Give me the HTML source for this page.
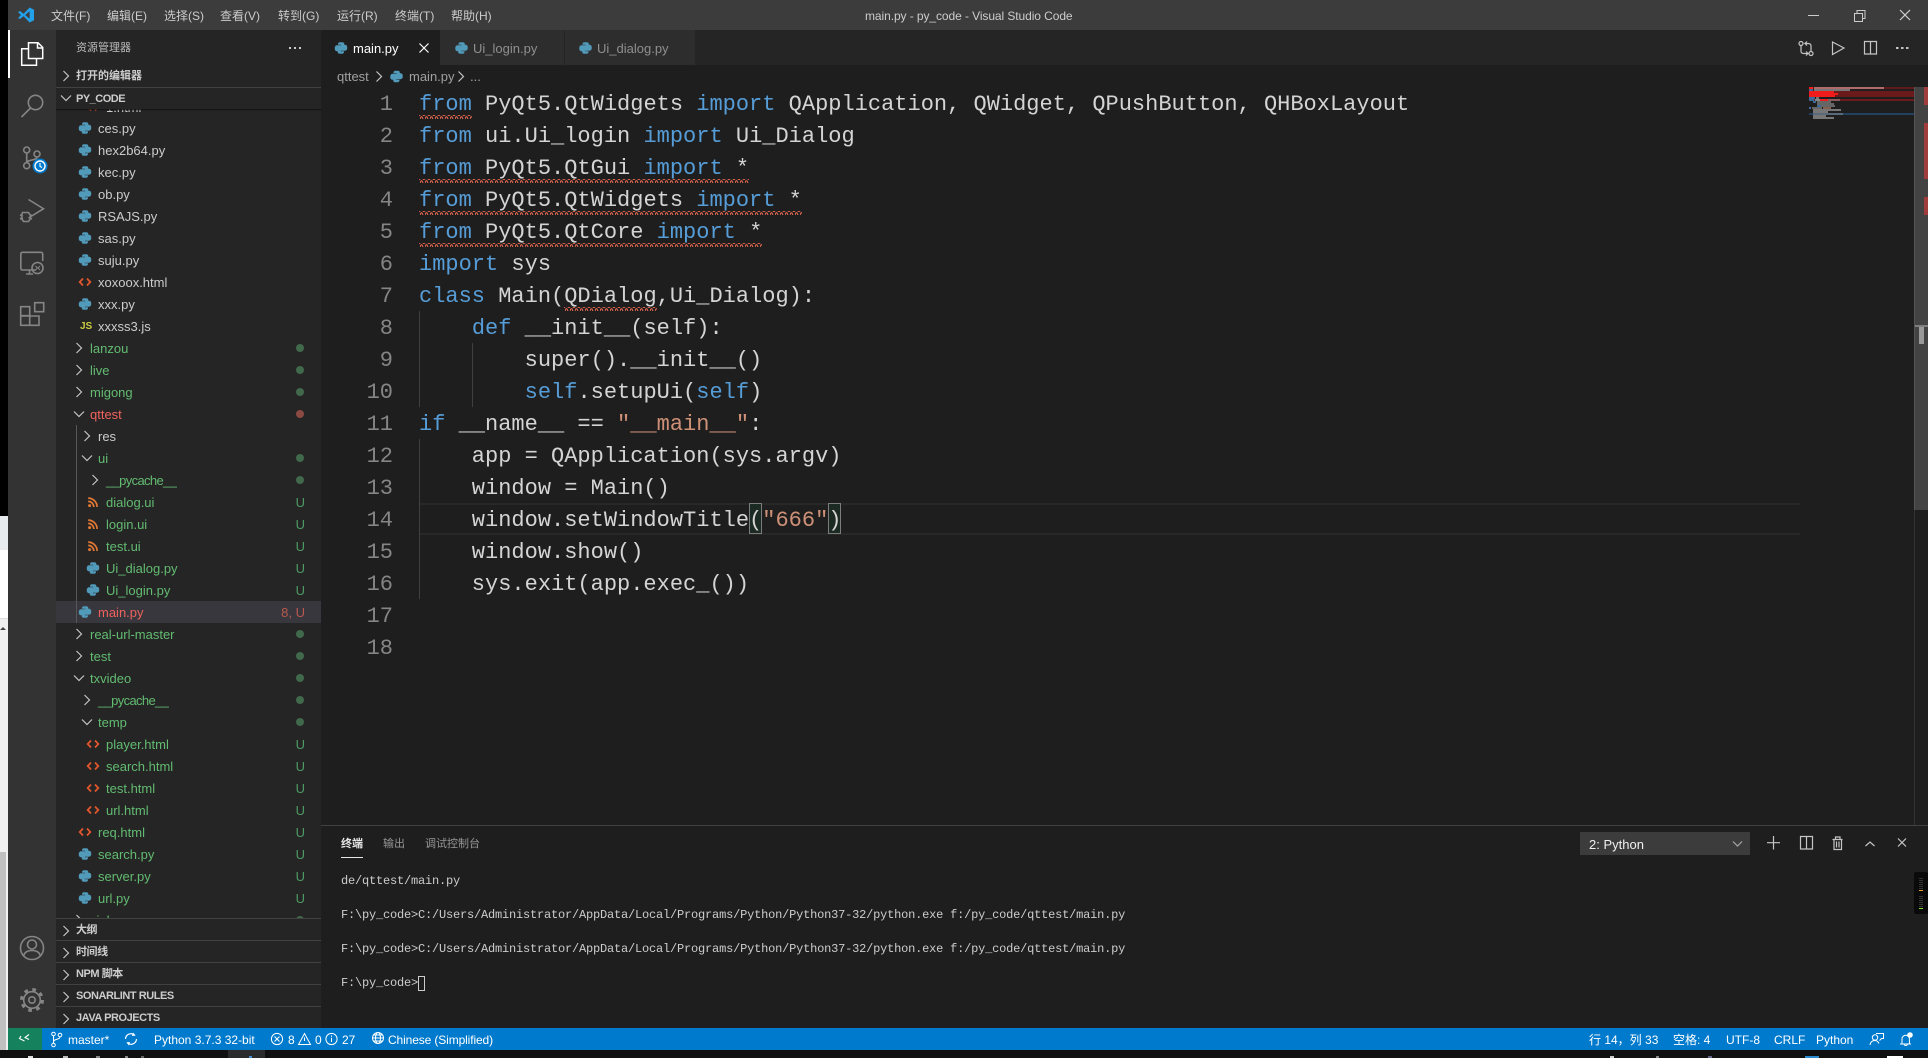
<!DOCTYPE html>
<html lang="zh"><head><meta charset="utf-8"><title>main.py - py_code - Visual Studio Code</title>
<style>
html,body{margin:0;padding:0;background:#1e1e1e}
body{position:relative;width:1928px;height:1058px;overflow:hidden;font-family:"Liberation Sans","Noto Sans CJK SC",sans-serif;font-size:13px;color:#ccc}
div,span.a{position:absolute}
.tx{position:absolute;white-space:pre;line-height:1}
#tree{position:absolute;left:56px;top:109px;width:265px;height:809px;overflow:hidden}
.r{position:absolute;left:0;width:265px;height:22px;line-height:22px;white-space:pre}
.r svg{position:absolute;top:3px;width:16px;height:16px}
.r b{position:absolute;font-weight:normal;top:1px}
.t1{left:34px}.t2{left:42px}.t3{left:50px}
.g{color:#62bb70}.e{color:#f0625c}.w{color:#ccc}
.p{letter-spacing:-.65px}
.d{position:absolute;left:240px;top:7px;width:8px;height:8px;border-radius:50%;background:#41694b}
.u{position:absolute;right:16px;top:1px;color:#4d9a62}
.sec{position:absolute;left:56px;width:265px;height:21px;border-top:1px solid #414141;font-weight:bold;font-size:11px;line-height:21px;color:#ccc;letter-spacing:-.45px}
.sec span{position:absolute;left:20px;top:1px}
.ln{position:absolute;left:340px;width:53px;text-align:right;font:22px/32px "Liberation Mono",monospace;color:#858585;margin-top:2px}
.c{position:absolute;left:419px;white-space:pre;font:22px/32px "Liberation Mono",monospace;color:#d4d4d4;margin-top:2px}
.k{color:#569cd6}.s{color:#ce9178}
.term{position:absolute;left:341px;white-space:pre;font:12px/17px "Liberation Mono",monospace;letter-spacing:-.2px;color:#cccccc;margin-top:1px}
.st{position:absolute;top:1029px;height:22px;line-height:22px;font-size:12px;color:#fff;white-space:pre}
.m{position:absolute;top:1px;height:30px;line-height:30px;font-size:12px;color:#ccc;white-space:pre}
</style></head><body>

<svg width="0" height="0" style="position:absolute">
<defs>
<symbol id="py" viewBox="0 0 16 16"><g fill="#519aba"><path id="pyh" d="M5 4.200a2 2 0 0 1 2-2h2.300a2 2 0 0 1 2 2v2.400a1.500 1.500 0 0 1-1.500 1.500H7.500a2.200 2.200 0 0 0-2.300 2.200V11.300H4a2.200 2.200 0 0 1-2.200-2.200V7.500A2.200 2.200 0 0 1 4 5.300h4.200v-.6H5z"/><path transform="rotate(180 8 8)" d="M5 4.200a2 2 0 0 1 2-2h2.300a2 2 0 0 1 2 2v2.400a1.500 1.500 0 0 1-1.500 1.500H7.500a2.200 2.200 0 0 0-2.300 2.200V11.300H4a2.200 2.200 0 0 1-2.200-2.200V7.500A2.200 2.200 0 0 1 4 5.300h4.200v-.6H5z"/></g></symbol>
<symbol id="ht" viewBox="0 0 16 16"><g fill="none" stroke="#e0562b" stroke-width="1.800"><polyline points="6,4.500 2.700,8 6,11.500"/><polyline points="10,4.500 13.300,8 10,11.500"/></g></symbol>
<symbol id="rs" viewBox="0 0 16 16"><circle cx="4.600" cy="11.600" r="1.500" fill="#e37933"/><g fill="none" stroke="#e37933" stroke-width="1.700"><path d="M3.200 7.400A5.600 5.600 0 0 1 8.800 13"/><path d="M3.200 4.100A8.900 8.900 0 0 1 12.100 13"/></g></symbol>
<symbol id="cr" viewBox="0 0 16 16"><polyline points="5.500,3 10.500,8 5.500,13" fill="none" stroke="#c5c5c5" stroke-width="1.200"/></symbol>
<symbol id="cd" viewBox="0 0 16 16"><polyline points="3,5.500 8,10.500 13,5.500" fill="none" stroke="#c5c5c5" stroke-width="1.200"/></symbol>
<pattern id="sq" width="5" height="4" patternUnits="userSpaceOnUse"><path d="M0 3.200Q1.250 -1.200 2.500 2T5 3.200" fill="none" stroke="#ee6a52" stroke-width="1"/></pattern>
</defs>
</svg>

<!-- left desktop strip -->
<div style="left:0;top:0;width:8px;height:516px;background:#000"></div>
<div style="left:0;top:516px;width:8px;height:34px;background:#e8ebee"></div>
<div style="left:0;top:550px;width:8px;height:68px;background:#fff"></div>
<div style="left:0;top:618px;width:8px;height:434px;background:#f0f0f0;border-top:1px solid #ddd"></div>
<div style="left:0;top:852px;width:6px;height:198px;background:#c0c0c0"></div>
<div style="left:0;top:627px;width:0;height:0;border-left:3px solid transparent;border-right:3px solid transparent;border-bottom:3px solid #444"></div>

<!-- title bar -->
<div style="left:8px;top:0;width:1920px;height:30px;background:#3c3c3c"></div>
<div class="m" style="left:51px">文件(F)</div>
<div class="m" style="left:107px">编辑(E)</div>
<div class="m" style="left:164px">选择(S)</div>
<div class="m" style="left:220px">查看(V)</div>
<div class="m" style="left:278px">转到(G)</div>
<div class="m" style="left:337px">运行(R)</div>
<div class="m" style="left:395px">终端(T)</div>
<div class="m" style="left:451px">帮助(H)</div>
<div class="m" style="left:865px;letter-spacing:-.08px">main.py - py_code - Visual Studio Code</div>

<!-- activity bar -->
<div style="left:8px;top:30px;width:48px;height:998px;background:#333"></div>
<div style="left:8px;top:30px;width:2px;height:48px;background:#fff"></div>

<!-- sidebar -->
<div style="left:56px;top:30px;width:265px;height:998px;background:#252526"></div>
<div class="tx" style="left:76px;top:43px;font-size:11px;color:#bbb">资源管理器</div>
<div style="left:56px;top:87px;width:265px;height:1px;background:#414141"></div>
<div class="tx" style="left:76px;top:71px;font-size:11px;font-weight:bold;color:#ccc">打开的编辑器</div>
<div class="tx" style="left:76px;top:94px;font-size:11px;font-weight:bold;color:#ccc;letter-spacing:-.5px">PY_CODE</div>

<div id="tree">
<div class="r" style="top:-13px"><svg style="left:29px"><use href="#ht"/></svg><b class="t3 w">1.html</b></div>
<div class="r" style="top:8px"><svg style="left:21px"><use href="#py"/></svg><b class="t2 w">ces.py</b></div>
<div class="r" style="top:30px"><svg style="left:21px"><use href="#py"/></svg><b class="t2 w">hex2b64.py</b></div>
<div class="r" style="top:52px"><svg style="left:21px"><use href="#py"/></svg><b class="t2 w">kec.py</b></div>
<div class="r" style="top:74px"><svg style="left:21px"><use href="#py"/></svg><b class="t2 w">ob.py</b></div>
<div class="r" style="top:96px"><svg style="left:21px"><use href="#py"/></svg><b class="t2 w">RSAJS.py</b></div>
<div class="r" style="top:118px"><svg style="left:21px"><use href="#py"/></svg><b class="t2 w">sas.py</b></div>
<div class="r" style="top:140px"><svg style="left:21px"><use href="#py"/></svg><b class="t2 w">suju.py</b></div>
<div class="r" style="top:162px"><svg style="left:21px"><use href="#ht"/></svg><b class="t2 w">xoxoox.html</b></div>
<div class="r" style="top:184px"><svg style="left:21px"><use href="#py"/></svg><b class="t2 w">xxx.py</b></div>
<div class="r" style="top:206px"><b style="left:24px;font-weight:bold;font-size:10px;color:#cbcb41">JS</b><b class="t2 w">xxxss3.js</b></div>
<div class="r" style="top:228px"><svg style="left:15px"><use href="#cr"/></svg><b class="t1 g">lanzou</b><i class="d"></i></div>
<div class="r" style="top:250px"><svg style="left:15px"><use href="#cr"/></svg><b class="t1 g">live</b><i class="d"></i></div>
<div class="r" style="top:272px"><svg style="left:15px"><use href="#cr"/></svg><b class="t1 g">migong</b><i class="d"></i></div>
<div class="r" style="top:294px"><svg style="left:15px"><use href="#cd"/></svg><b class="t1 e">qttest</b><i class="d" style="background:#8c4a43"></i></div>
<div class="r" style="top:316px"><svg style="left:23px"><use href="#cr"/></svg><b class="t2 w">res</b></div>
<div class="r" style="top:338px"><svg style="left:23px"><use href="#cd"/></svg><b class="t2 g">ui</b><i class="d"></i></div>
<div class="r" style="top:360px"><svg style="left:31px"><use href="#cr"/></svg><b class="t3 g p">__pycache__</b><i class="d"></i></div>
<div class="r" style="top:382px"><svg style="left:29px"><use href="#rs"/></svg><b class="t3 g">dialog.ui</b><span class="u">U</span></div>
<div class="r" style="top:404px"><svg style="left:29px"><use href="#rs"/></svg><b class="t3 g">login.ui</b><span class="u">U</span></div>
<div class="r" style="top:426px"><svg style="left:29px"><use href="#rs"/></svg><b class="t3 g">test.ui</b><span class="u">U</span></div>
<div class="r" style="top:448px"><svg style="left:29px"><use href="#py"/></svg><b class="t3 g">Ui_dialog.py</b><span class="u">U</span></div>
<div class="r" style="top:470px"><svg style="left:29px"><use href="#py"/></svg><b class="t3 g">Ui_login.py</b><span class="u">U</span></div>
<div class="r" style="top:492px;background:#37373d"><svg style="left:21px"><use href="#py"/></svg><b class="t2 e">main.py</b><span class="u" style="color:#b9584f">8, U</span></div>
<div class="r" style="top:514px"><svg style="left:15px"><use href="#cr"/></svg><b class="t1 g">real-url-master</b><i class="d"></i></div>
<div class="r" style="top:536px"><svg style="left:15px"><use href="#cr"/></svg><b class="t1 g">test</b><i class="d"></i></div>
<div class="r" style="top:558px"><svg style="left:15px"><use href="#cd"/></svg><b class="t1 g">txvideo</b><i class="d"></i></div>
<div class="r" style="top:580px"><svg style="left:23px"><use href="#cr"/></svg><b class="t2 g p">__pycache__</b><i class="d"></i></div>
<div class="r" style="top:602px"><svg style="left:23px"><use href="#cd"/></svg><b class="t2 g">temp</b><i class="d"></i></div>
<div class="r" style="top:624px"><svg style="left:29px"><use href="#ht"/></svg><b class="t3 g">player.html</b><span class="u">U</span></div>
<div class="r" style="top:646px"><svg style="left:29px"><use href="#ht"/></svg><b class="t3 g">search.html</b><span class="u">U</span></div>
<div class="r" style="top:668px"><svg style="left:29px"><use href="#ht"/></svg><b class="t3 g">test.html</b><span class="u">U</span></div>
<div class="r" style="top:690px"><svg style="left:29px"><use href="#ht"/></svg><b class="t3 g">url.html</b><span class="u">U</span></div>
<div class="r" style="top:712px"><svg style="left:21px"><use href="#ht"/></svg><b class="t2 g">req.html</b><span class="u">U</span></div>
<div class="r" style="top:734px"><svg style="left:21px"><use href="#py"/></svg><b class="t2 g">search.py</b><span class="u">U</span></div>
<div class="r" style="top:756px"><svg style="left:21px"><use href="#py"/></svg><b class="t2 g">server.py</b><span class="u">U</span></div>
<div class="r" style="top:778px"><svg style="left:21px"><use href="#py"/></svg><b class="t2 g">url.py</b><span class="u">U</span></div>
<div class="r" style="top:800px"><svg style="left:15px"><use href="#cr"/></svg><b class="t1 g">xinhua</b><i class="d"></i></div>
<div style="left:20px;top:316px;width:1px;height:198px;background:#585858"></div>
</div>
<div style="left:56px;top:109px;width:265px;height:2px;background:linear-gradient(#111,rgba(0,0,0,0))"></div>

<div class="sec" style="top:918px"><span>大纲</span></div>
<div class="sec" style="top:940px"><span>时间线</span></div>
<div class="sec" style="top:962px"><span>NPM 脚本</span></div>
<div class="sec" style="top:984px"><span>SONARLINT RULES</span></div>
<div class="sec" style="top:1006px"><span>JAVA PROJECTS</span></div>

<!-- tabs -->
<div style="left:321px;top:30px;width:1607px;height:35px;background:#252526"></div>
<div style="left:321px;top:30px;width:119px;height:35px;background:#1e1e1e"></div>
<div style="left:440px;top:30px;width:124px;height:35px;background:#2d2d2d"></div>
<div style="left:564px;top:30px;width:1px;height:35px;background:#252526"></div>
<div style="left:565px;top:30px;width:130px;height:35px;background:#2d2d2d"></div>
<div class="tx" style="left:353px;top:42px;color:#fff">main.py</div>
<div class="tx" style="left:473px;top:42px;color:#8f8f8f">Ui_login.py</div>
<div class="tx" style="left:597px;top:42px;color:#8f8f8f">Ui_dialog.py</div>
<!-- breadcrumb -->
<div class="tx" style="left:337px;top:70px;color:#a0a0a0">qttest</div>
<div class="tx" style="left:409px;top:70px;color:#a0a0a0">main.py</div>
<div class="tx" style="left:470px;top:70px;color:#a0a0a0">...</div>

<!-- code -->
<div style="left:419px;top:503px;width:1381px;height:32px;box-sizing:border-box;border-top:2px solid #282828;border-bottom:2px solid #282828"></div>
<div style="left:419px;top:311px;width:1px;height:96px;background:#404040"></div>
<div style="left:472px;top:343px;width:1px;height:64px;background:#404040"></div>
<div style="left:419px;top:439px;width:1px;height:160px;background:#404040"></div>
<div style="left:749px;top:503px;width:13px;height:31px;box-sizing:border-box;border:1px solid #7c7c7c;background:#1b2a22"></div>
<div style="left:828px;top:503px;width:13px;height:31px;box-sizing:border-box;border:1px solid #7c7c7c;background:#1b2a22"></div>

<div class="ln" style="top:87px">1</div><div class="ln" style="top:119px">2</div><div class="ln" style="top:151px">3</div><div class="ln" style="top:183px">4</div><div class="ln" style="top:215px">5</div><div class="ln" style="top:247px">6</div><div class="ln" style="top:279px">7</div><div class="ln" style="top:311px">8</div><div class="ln" style="top:343px">9</div><div class="ln" style="top:375px">10</div><div class="ln" style="top:407px">11</div><div class="ln" style="top:439px">12</div><div class="ln" style="top:471px">13</div><div class="ln" style="top:503px">14</div><div class="ln" style="top:535px">15</div><div class="ln" style="top:567px">16</div><div class="ln" style="top:599px">17</div><div class="ln" style="top:631px">18</div>

<div class="c" style="top:87px"><span class="k">from</span> PyQt5.QtWidgets <span class="k">import</span> QApplication, QWidget, QPushButton, QHBoxLayout</div>
<div class="c" style="top:119px"><span class="k">from</span> ui.Ui_login <span class="k">import</span> Ui_Dialog</div>
<div class="c" style="top:151px"><span class="k">from</span> PyQt5.QtGui <span class="k">import</span> *</div>
<div class="c" style="top:183px"><span class="k">from</span> PyQt5.QtWidgets <span class="k">import</span> *</div>
<div class="c" style="top:215px"><span class="k">from</span> PyQt5.QtCore <span class="k">import</span> *</div>
<div class="c" style="top:247px"><span class="k">import</span> sys</div>
<div class="c" style="top:279px"><span class="k">class</span> Main(QDialog,Ui_Dialog):</div>
<div class="c" style="top:311px">    <span class="k">def</span> __init__(self):</div>
<div class="c" style="top:343px">        super().__init__()</div>
<div class="c" style="top:375px">        <span class="k">self</span>.setupUi(<span class="k">self</span>)</div>
<div class="c" style="top:407px"><span class="k">if</span> __name__ == <span class="s">"__main__"</span>:</div>
<div class="c" style="top:439px">    app = QApplication(sys.argv)</div>
<div class="c" style="top:471px">    window = Main()</div>
<div class="c" style="top:503px">    window.setWindowTitle(<span class="s">"666"</span>)</div>
<div class="c" style="top:535px">    window.show()</div>
<div class="c" style="top:567px">    sys.exit(app.exec_())</div>

<!-- panel -->
<div style="left:321px;top:825px;width:1607px;height:1px;background:#414141"></div>
<div style="left:1914px;top:510px;width:1px;height:315px;background:#333"></div>
<div class="tx" style="left:341px;top:839px;font-size:11px;color:#e7e7e7;font-weight:bold">终端</div>
<div class="tx" style="left:383px;top:839px;font-size:11px;color:#969696">输出</div>
<div class="tx" style="left:425px;top:839px;font-size:11px;color:#969696">调试控制台</div>
<div style="left:341px;top:857px;width:22px;height:1px;background:#e7e7e7"></div>
<div style="left:1580px;top:832px;width:170px;height:23px;background:#3c3c3c"></div>
<div class="tx" style="left:1589px;top:838px;color:#f0f0f0">2: Python</div>

<div class="term" style="top:872px">de/qttest/main.py</div>
<div class="term" style="top:906px">F:\py_code&gt;C:/Users/Administrator/AppData/Local/Programs/Python/Python37-32/python.exe f:/py_code/qttest/main.py</div>
<div class="term" style="top:940px">F:\py_code&gt;C:/Users/Administrator/AppData/Local/Programs/Python/Python37-32/python.exe f:/py_code/qttest/main.py</div>
<div class="term" style="top:974px">F:\py_code&gt;</div>
<div style="left:418px;top:976px;width:7px;height:15px;box-sizing:border-box;border:1px solid #ccc"></div>

<!-- status bar -->
<div style="left:8px;top:1028px;width:1920px;height:22px;background:#007acc"></div>
<div style="left:8px;top:1028px;width:34px;height:22px;background:#16825d"></div>
<div class="st" style="left:68px">master*</div>
<div class="st" style="left:154px">Python 3.7.3 32-bit</div>
<div class="st" style="left:288px">8</div>
<div class="st" style="left:315px">0</div>
<div class="st" style="left:342px">27</div>
<div class="st" style="left:388px;letter-spacing:-.12px">Chinese (Simplified)</div>
<div class="st" style="left:1589px">行 14，列 33</div>
<div class="st" style="left:1673px">空格: 4</div>
<div class="st" style="left:1726px">UTF-8</div>
<div class="st" style="left:1774px">CRLF</div>
<div class="st" style="left:1816px">Python</div>

<!-- taskbar sliver -->
<div style="left:0;top:1050px;width:1928px;height:8px;background:#101010"></div>
<div style="left:228px;top:1050px;width:37px;height:8px;background:#2b2b2b"></div>

<!-- scrollbar + minimap + icons -->
<svg width="1928" height="1058" style="position:absolute;left:0;top:0">
<!-- squiggles -->
<rect x="419" y="115" width="53" height="4" fill="url(#sq)"/>
<rect x="419" y="179" width="330" height="4" fill="url(#sq)"/>
<rect x="419" y="211" width="383" height="4" fill="url(#sq)"/>
<rect x="419" y="243" width="343" height="4" fill="url(#sq)"/>
<rect x="564" y="307" width="93" height="4" fill="url(#sq)"/>

<!-- minimap -->
<g>
<rect x="1809" y="87" width="105" height="2" fill="#5f1a1a"/>
<rect x="1809" y="91" width="105" height="6" fill="#6b1a1a"/>
<rect x="1809" y="99" width="105" height="2" fill="#6b1a1a"/>
<rect x="1809" y="113" width="105" height="2" fill="#23405f"/>
<rect x="1809" y="87" width="4" height="2" fill="#ff1a1a"/><rect x="1814" y="87" width="70" height="2" fill="#b06a6a"/>
<rect x="1809" y="89" width="4" height="2" fill="#3a6a9a"/><rect x="1814" y="89" width="36" height="2" fill="#777"/>
<rect x="1809" y="91" width="25" height="2" fill="#f01c1c"/>
<rect x="1809" y="93" width="29" height="2" fill="#f01c1c"/>
<rect x="1809" y="95" width="26" height="2" fill="#f01c1c"/>
<rect x="1809" y="97" width="6" height="2" fill="#3a6a9a"/><rect x="1816" y="97" width="3" height="2" fill="#777"/>
<rect x="1809" y="99" width="5" height="2" fill="#3a6a9a"/><rect x="1815" y="99" width="5" height="2" fill="#888"/><rect x="1820" y="99" width="8" height="2" fill="#f01c1c"/><rect x="1828" y="99" width="12" height="2" fill="#8a5a5a"/>
<rect x="1813" y="101" width="3" height="2" fill="#3a6a9a"/><rect x="1817" y="101" width="14" height="2" fill="#666"/>
<rect x="1817" y="103" width="17" height="2" fill="#666"/>
<rect x="1817" y="105" width="4" height="2" fill="#3a6a9a"/><rect x="1821" y="105" width="14" height="2" fill="#666"/>
<rect x="1809" y="107" width="2" height="2" fill="#3a6a9a"/><rect x="1812" y="107" width="10" height="2" fill="#666"/><rect x="1823" y="107" width="8" height="2" fill="#85604f"/>
<rect x="1813" y="109" width="28" height="2" fill="#777"/>
<rect x="1813" y="111" width="15" height="2" fill="#777"/>
<rect x="1813" y="113" width="30" height="2" fill="#5a6a7a"/>
<rect x="1813" y="115" width="13" height="2" fill="#777"/>
<rect x="1813" y="117" width="21" height="2" fill="#777"/>
</g>
<!-- scrollbar -->
<rect x="1914" y="87" width="14" height="423" fill="#434343"/>
<rect x="1914" y="87" width="1" height="423" fill="#555"/>
<rect x="1924" y="87" width="4" height="18" fill="#a13c3c"/>
<rect x="1924" y="123" width="4" height="56" fill="#a13c3c"/>
<rect x="1924" y="197" width="4" height="18" fill="#a13c3c"/>
<rect x="1915" y="325" width="13" height="2" fill="#7f7f7f"/>
<rect x="1919" y="327" width="5" height="17" fill="#9a9a9a"/>
<!-- terminal widget -->
<rect x="1914" y="872" width="14" height="42" rx="2" fill="#0a0a0a"/>
<g fill="#333"><rect x="1919" y="878" width="4" height="1"/><rect x="1919" y="880" width="4" height="1"/><rect x="1919" y="882" width="4" height="1"/><rect x="1919" y="884" width="4" height="1"/><rect x="1919" y="886" width="4" height="1"/><rect x="1919" y="888" width="4" height="1"/><rect x="1919" y="896" width="4" height="1"/><rect x="1919" y="898" width="4" height="1"/><rect x="1919" y="900" width="4" height="1"/><rect x="1919" y="902" width="4" height="1"/><rect x="1919" y="904" width="4" height="1"/><rect x="1919" y="906" width="4" height="1"/></g>
<rect x="1919" y="890" width="4" height="1" fill="#f0a020"/><rect x="1919" y="908" width="4" height="1" fill="#80e020"/>

<!-- vscode logo -->
<path fill-rule="evenodd" fill="#23a0ea" d="M18 12l2-1 3.600 2.700L29.600 7.500 34 9.700V20.300L29.600 22.500 23.600 16.300 20 19l-2-1 3-3zM29.600 11.300L25.200 15l4.400 3.700z"/>

<!-- window controls -->
<g fill="none" stroke="#ccc" stroke-width="1">
<path d="M1808 15.500H1819"/>
<path d="M1854.500 13.500h8v8h-8zM1857 13v-2.500h8v8h-2"/>
<path d="M1900 10l10 10M1910 10l-10 10" stroke-width="1.200"/>
</g>

<!-- activity icons -->
<g fill="none" stroke="#fff" stroke-width="1.500">
<path d="M28 48.700H21.700V65.300H36.500V58.700"/>
<path d="M28.500 58.500V42.700H38L42.700 47.400V58.500Z"/>
<path d="M37.500 43V48H42.700"/>
</g>
<g fill="none" stroke="#858585" stroke-width="1.600">
<circle cx="35.500" cy="102.500" r="7.200"/>
<path d="M30.500 108L21.500 117"/>
<circle cx="26.700" cy="150" r="3"/><circle cx="26.700" cy="165.700" r="3"/><circle cx="37" cy="154" r="3"/>
<path d="M26.700 153V162.700M37 157c0 4-10 2-10 6"/>
<path d="M28.500 199.500L43.500 208.700 28.500 218"/>
<path d="M22.500 212.500h6l2 3v3l-2 3h-5l-2-3v-3zM20 215l3 1M20 219l3-1M32 215l-2 1M32 219l-2-1"/>
<path d="M36 270H22.500a1.700 1.700 0 0 1-1.700-1.700V254a1.700 1.700 0 0 1 1.700-1.700H41a1.700 1.700 0 0 1 1.700 1.700V261"/>
<path d="M26 274H33M29.500 270V274"/>
<circle cx="37.500" cy="268" r="5.500"/>
<path d="M35.500 266l2 2-2 2M40 266l-2 2 2 2" stroke-width="1"/>
<path d="M34.700 302.700h9v9h-9z"/>
<path d="M20.700 306.700h9v9h-9zM20.700 316h9v9.300h-9zM29.700 316h9.300v9.300h-9.300z"/>
<circle cx="32" cy="948" r="11.500"/>
<circle cx="32" cy="944.500" r="4.500"/>
<path d="M23.500 956c1-4 4.500-5.500 8.500-5.500s7.500 1.500 8.500 5.500"/>
<circle cx="32" cy="1000" r="3.200"/>
<circle cx="32" cy="1000" r="8.300"/>
<circle cx="32" cy="1000" r="10.300" stroke-width="3.400" stroke-dasharray="3.600 4.490"/>
</g>
<circle cx="40" cy="166" r="7.500" fill="#007acc"/>
<circle cx="40" cy="166" r="5" fill="none" stroke="#fff" stroke-width="1.400"/>
<path d="M40 163v3.300l2 1.200" fill="none" stroke="#fff" stroke-width="1.100"/>

<!-- sidebar chrome -->
<use href="#cr" x="58" y="68" width="16" height="16"/>
<use href="#cd" x="58" y="90" width="16" height="16"/>
<use href="#cr" x="58" y="923" width="16" height="16"/>
<use href="#cr" x="58" y="945" width="16" height="16"/>
<use href="#cr" x="58" y="967" width="16" height="16"/>
<use href="#cr" x="58" y="989" width="16" height="16"/>
<use href="#cr" x="58" y="1011" width="16" height="16"/>
<g fill="#ccc"><rect x="289" y="47" width="2" height="2"/><rect x="294" y="47" width="2" height="2"/><rect x="299" y="47" width="2" height="2"/></g>

<!-- tab icons -->
<use href="#py" x="333" y="40" width="16" height="16"/>
<use href="#py" x="453.500" y="40" width="16" height="16"/>
<use href="#py" x="577.500" y="40" width="16" height="16"/>
<use href="#py" x="388.500" y="68.500" width="16" height="16"/>
<path d="M419.500 43.500l9 9M428.500 43.500l-9 9" stroke="#fff" stroke-width="1.200" fill="none"/>
<use href="#cr" x="371" y="68.500" width="16" height="16"/>
<use href="#cr" x="453" y="68.500" width="16" height="16"/>

<!-- editor actions -->
<g fill="none" stroke="#c5c5c5" stroke-width="1.200">
<circle cx="1801" cy="43.500" r="2"/><circle cx="1811" cy="53.500" r="2"/>
<path d="M1801 46v5c0 2 1 2.500 3 2.500h4l-2-2M1811 51v-5c0-2-1-2.500-3-2.500h-3l2 2M1808 53.500l-2 2M1805 43.500l2-2"/>
<path d="M1832.500 42L1844 48 1832.500 54.500Z"/>
<path d="M1864.500 41.500h12v12.500h-12zM1870.500 41.500v12.500"/>
</g>
<g fill="#c5c5c5"><rect x="1896" y="47" width="2.500" height="2"/><rect x="1901" y="47" width="2.500" height="2"/><rect x="1906" y="47" width="2.500" height="2"/></g>

<!-- panel actions -->
<path d="M1733 841.500l4.500 4.500 4.500-4.500" fill="none" stroke="#a8a8a8" stroke-width="1.200"/>
<g fill="none" stroke="#c5c5c5" stroke-width="1.200">
<path d="M1767 842.700h13M1773.500 836v13.500"/>
<path d="M1800.500 836.500h12v12.500h-12zM1806.500 836.500v12.500"/>
<path d="M1832.500 839.500h10M1834 839.500v10h7.500v-10M1835.500 839v-2h4.500v2M1836.500 841.500v6M1839 841.500v6"/>
<path d="M1865.500 846l4.500-4 4.500 4"/>
<path d="M1898 838.500l8 8M1906 838.500l-8 8"/>
</g>

<!-- status icons -->
<g fill="none" stroke="#fff" stroke-width="1">
<path d="M21 1036l-1.500 2.500 5 2.500M29 1034.500l-4 3 4 2" stroke-width="1.100"/>
<circle cx="53.500" cy="1034" r="1.800"/><circle cx="53.500" cy="1045" r="1.800"/><circle cx="60" cy="1035" r="1.800"/>
<path d="M53.500 1036v7M60 1037c0 3-6.500 1.500-6.500 5"/>
<path d="M125.500 1039a5.500 5.500 0 0 1 9.500-3.500M136.500 1039a5.500 5.500 0 0 1-9.500 3.500" stroke-width="1.200"/>
<path d="M133 1032.500l2.500 3-3.500.5M129 1045.500l-2.500-3 3.500-.5" fill="#fff" stroke="none"/>
<circle cx="277" cy="1039" r="5.600"/><path d="M274.500 1036.500l5 5M279.500 1036.500l-5 5"/>
<path d="M304.500 1033.500L310.500 1044.500H298.500Z"/><path d="M304.500 1037.500v3.500"/>
<circle cx="331.500" cy="1039" r="5.600"/><path d="M331.500 1037.700v4.300M331.500 1035.500v1.200"/>
<circle cx="378" cy="1038" r="5.500"/><ellipse cx="378" cy="1038" rx="2.500" ry="5.500"/><path d="M372.500 1038h11M373.500 1035h9M373.500 1041h9"/>
<circle cx="1875" cy="1037.500" r="2.700"/><path d="M1870 1045c.5-3 2.500-4.500 5-4.500 2 0 3 1 4 3M1876 1033.500h7.500v5h-2l-2 2"/>
<path d="M1900 1044h11M1902 1044v-5a3.700 3.700 0 0 1 7.400 0v5M1904 1044.500a2 2 0 0 0 3.500 0"/>
</g>
<circle cx="1910" cy="1035" r="2.800" fill="#fff"/>

<!-- taskbar specks -->
<g>
<rect x="28" y="1056" width="5" height="2" fill="#ddd"/><rect x="63" y="1056" width="5" height="2" fill="#bbb"/><rect x="96" y="1056" width="4" height="2" fill="#888"/><rect x="125" y="1056" width="3" height="2" fill="#888"/><rect x="141" y="1056" width="3" height="2" fill="#666"/>
<rect x="249" y="1056" width="3" height="2" fill="#4a90d0"/>
<rect x="1610" y="1056" width="4" height="2" fill="#ccc"/><rect x="1656" y="1056" width="3" height="2" fill="#888"/><rect x="1708" y="1056" width="4" height="2" fill="#668"/>
<rect x="1805" y="1056" width="14" height="2" fill="#2a8ad0"/><rect x="1887" y="1056" width="16" height="2" fill="#fff"/>
</g>
</svg>
</body></html>
